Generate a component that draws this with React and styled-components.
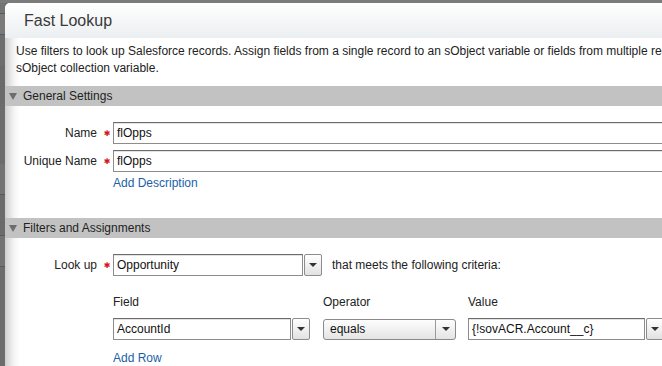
import React from "react";
import styled, { createGlobalStyle } from "styled-components";

const GlobalStyle = createGlobalStyle`
  html, body {
    margin: 0;
    padding: 0;
    background: #717171;
    overflow: hidden;
  }
  body {
    font-family: "Liberation Sans", Arial, sans-serif;
    font-size: 12px;
    color: #222;
  }
`;

const Page = styled.div`
  display: flex;
  width: 662px;
  height: 366px;
  overflow: hidden;
  background: linear-gradient(to bottom, #7b7b7b 0, #7b7b7b 3px, #6c6c6c 3px);
`;

const Backdrop = styled.div`
  flex: 0 0 5px;
  display: flex;
  flex-direction: column;
  padding-top: 3px;
`;

const BackdropBand = styled.div`
  height: ${(p) => p.$h}px;
  background: ${(p) => p.$c};
  border-bottom: ${(p) => (p.$line ? "1px solid #5a5a5a" : "none")};
`;

const Dialog = styled.div`
  flex: 0 0 720px;
  margin-top: 3px;
  border-top-left-radius: 5px;
  background: linear-gradient(to right, #cfcfcf 0, #f4f4f4 9px, #fff 15px);
  display: flex;
  flex-direction: column;
`;

const Header = styled.div`
  height: 35px;
  display: flex;
  align-items: center;
  padding-left: 19px;
  border-top-left-radius: 5px;
  background: linear-gradient(to bottom, #ffffff 0%, #f6f7f8 45%, #eceff1 100%);
`;

const Title = styled.h1`
  margin: 0;
  font-size: 16px;
  font-weight: normal;
  color: #3a3a3a;
`;

const Description = styled.p`
  margin: 0;
  padding: 5px 0 0 11px;
  line-height: 17px;
  white-space: nowrap;
`;

const SectionBar = styled.div`
  margin-top: ${(p) => p.$mt}px;
  height: 20px;
  background: #c2c2c2;
  display: flex;
  align-items: center;
  padding-left: 4px;
  gap: 6px;
  color: #222;
`;

const Caret = styled.span`
  width: 0;
  height: 0;
  border-left: 4px solid transparent;
  border-right: 4px solid transparent;
  border-top: 7px solid #6d6d6d;
`;

const Row = styled.div`
  display: flex;
  align-items: center;
  margin-top: ${(p) => p.$mt}px;
`;

const Label = styled.label`
  width: 92px;
  text-align: right;
  color: #222;
`;

const Req = styled.span`
  box-sizing: border-box;
  width: 16px;
  padding-left: 4px;
  text-align: center;
  color: #d8141b;
  font-family: "DejaVu Sans", sans-serif;
  font-size: 8px;
`;

const Indent = styled.div`
  margin-left: 108px;
  margin-top: ${(p) => p.$mt}px;
  display: flex;
  align-items: center;
  line-height: 16px;
`;

const TextInput = styled.div`
  box-sizing: border-box;
  width: ${(p) => p.$w}px;
  height: 22px;
  border: 1px solid #8c8c8c;
  border-top-color: #6b6b6b;
  box-shadow: inset 0 1px 0 #e4e4e4;
  background: #fff;
  padding: 0 3px;
  display: flex;
  align-items: center;
  white-space: nowrap;
  color: #111;
`;

const DropButton = styled.div`
  box-sizing: border-box;
  width: 18px;
  height: 22px;
  margin-left: 1px;
  border: 1px solid #8c8c8c;
  border-radius: 2px;
  background: linear-gradient(to bottom, #ffffff, #e2e2e2);
  display: flex;
  align-items: center;
  justify-content: center;
`;

const DownArrow = styled.span`
  width: 0;
  height: 0;
  border-left: 4px solid transparent;
  border-right: 4px solid transparent;
  border-top: 4px solid #333;
`;

const Select = styled.div`
  box-sizing: border-box;
  width: 133px;
  height: 21px;
  border: 1px solid #8a8a8a;
  border-radius: 3px;
  background: linear-gradient(to bottom, #fdfdfd, #e4e4e4);
  display: flex;
  align-items: stretch;
`;

const SelectValue = styled.div`
  flex: 1;
  display: flex;
  align-items: center;
  padding-left: 6px;
  color: #111;
`;

const SelectArrow = styled.div`
  width: 19px;
  border-left: 1px solid #9a9a9a;
  display: flex;
  align-items: center;
  justify-content: center;
`;

const Link = styled.a`
  color: #1b5fa8;
  text-decoration: none;
  cursor: pointer;
`;

const Hint = styled.span`
  margin-left: 10px;
  color: #222;
`;

const Column = styled.div`
  width: ${(p) => p.$w}px;
  display: flex;
  align-items: center;
`;

const Field = ({ label, value, width = 600, mt = 6 }) => (
  <Row $mt={mt}>
    <Label>{label}</Label>
    <Req>✱</Req>
    <TextInput $w={width}>{value}</TextInput>
  </Row>
);

const Combo = ({ value, width }) => (
  <>
    <TextInput $w={width}>{value}</TextInput>
    <DropButton>
      <DownArrow />
    </DropButton>
  </>
);

const bands = [
  [10, "#747474", true],
  [20, "#7a7a7a", true],
  [30, "#6e6e6e", false],
  [40, "#6a6a6a", false],
  [60, "#6c6c6c", false],
  [30, "#737373", true],
  [40, "#6b6b6b", true],
  [30, "#737373", true],
  [100, "#6c6c6c", false],
];

export default function App() {
  return (
    <>
      <GlobalStyle />
      <Page>
        <Backdrop>
          {bands.map(([h, c, line], i) => (
            <BackdropBand key={i} $h={h} $c={c} $line={line} />
          ))}
        </Backdrop>
        <Dialog>
          <Header>
            <Title>Fast Lookup</Title>
          </Header>
          <Description>
            Use filters to look up Salesforce records. Assign fields from a single record to an sObject variable or
            fields from multiple records to an
            <br />
            sObject collection variable.
          </Description>

          <SectionBar $mt={9}>
            <Caret />
            General Settings
          </SectionBar>
          <Field label="Name" value="flOpps" mt={16} />
          <Field label="Unique Name" value="flOpps" />
          <Indent $mt={3}>
            <Link>Add Description</Link>
          </Indent>

          <SectionBar $mt={27}>
            <Caret />
            Filters and Assignments
          </SectionBar>
          <Row $mt={16}>
            <Label>Look up</Label>
            <Req>✱</Req>
            <Combo value="Opportunity" width={190} />
            <Hint>that meets the following criteria:</Hint>
          </Row>

          <Indent $mt={18}>
            <Column $w={210}>Field</Column>
            <Column $w={145}>Operator</Column>
            <Column $w={200}>Value</Column>
          </Indent>
          <Indent $mt={8}>
            <Column $w={210}>
              <Combo value="AccountId" width={178} />
            </Column>
            <Column $w={145}>
              <Select>
                <SelectValue>equals</SelectValue>
                <SelectArrow>
                  <DownArrow />
                </SelectArrow>
              </Select>
            </Column>
            <Column $w={200}>
              <Combo value="{!sovACR.Account__c}" width={177} />
            </Column>
          </Indent>
          <Indent $mt={10}>
            <Link>Add Row</Link>
          </Indent>
        </Dialog>
      </Page>
    </>
  );
}
